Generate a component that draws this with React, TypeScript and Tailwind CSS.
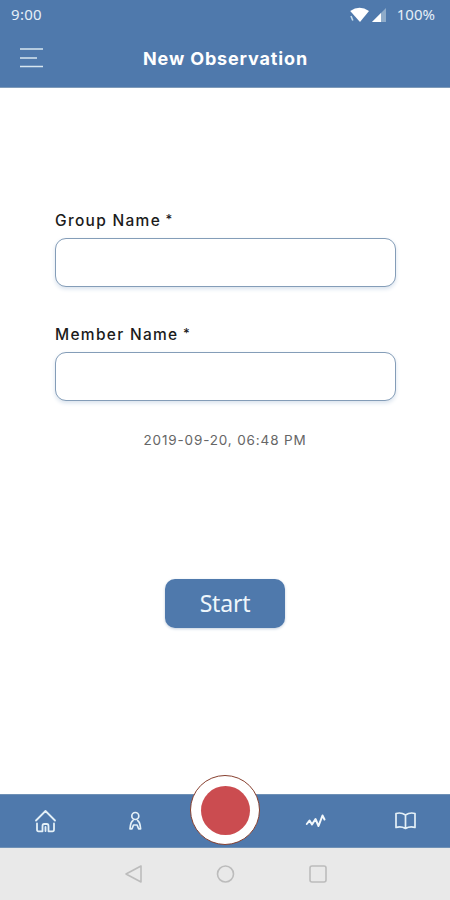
import type { ReactNode } from 'react';

function StatusBar() {
  return (
    <div className="flex h-[29px] items-center pl-[11px] pr-[15px] font-['Noto_Sans','Open_Sans',sans-serif] text-[15px] text-[#e5eff7]">
      <span className="tracking-[0.3px]">9:00</span>
      <svg className="ml-auto" width="40" height="18" viewBox="0 0 40 18">
        <path d="M1.200 5Q10.500 -1.500 20 5L11 16Z" fill="#fff" />
        <path d="M2 10l1.800 4.500" stroke="#c4dceb" strokeWidth="1.600" />
        <path d="M23 16L37 2V16Z" fill="#8eabc9" />
        <path d="M23 16L32 7V16Z" fill="#fff" />
      </svg>
      <span className="ml-[8px] tracking-[0px]">100%</span>
    </div>
  );
}

function Header() {
  return (
    <header className="h-[88px] shrink-0 border-b border-[#7f9bb9] bg-[#4f79ac]">
      <StatusBar />
      <div className="grid h-[58px] grid-cols-[60px_1fr_60px] items-center">
        <svg className="ml-[19px]" width="25" height="22" viewBox="0 0 25 22" stroke="#d7e6f0" strokeWidth="1.500">
          <path d="M1 2H24M1 11H18M1 19.500H24" />
        </svg>
        <h1 className="pl-px text-center text-[18px] font-bold tracking-[0.85px] whitespace-nowrap text-white">New Observation</h1>
      </div>
    </header>
  );
}

function Field({ label }: { label: string }) {
  return (
    <label className="block">
      <span className="block h-[28px] pt-[1px] pl-[0.5px] text-[15.5px] leading-[20px] font-medium tracking-[1.3px] text-[#1b1b1b]">
        {label} <span className="-ml-[1px] inline-block -translate-y-[2px] text-[13px] leading-none">*</span>
      </span>
      <input className="block h-[49px] w-full rounded-[11px] border-[1.5px] border-[#849db8] bg-white px-4 shadow-[0_2px_4px_#d8e2ed] outline-none" />
    </label>
  );
}

function Tab({ children }: { children?: ReactNode }) {
  return <div className="flex items-center justify-center">{children}</div>;
}

function TabBar() {
  return (
    <nav className="relative grid h-[54px] shrink-0 grid-cols-5 border-y border-[#6f91b6] bg-[#4f79ac]">
      <Tab>
        <svg width="24" height="24" viewBox="0 0 24 24" fill="none" stroke="#e4f0f7" strokeWidth="1.800" strokeLinecap="round" strokeLinejoin="round">
          <path d="M3 11.500L12.500 2L22 11.500M4 14.500V20.500Q4 22.300 5.500 22.300H9.500V17Q9.500 15 11.200 15H13.800Q15.500 15 15.500 17V22.300H19.500Q21 22.300 21 20.500V14.500M12.500 18V22" />
        </svg>
      </Tab>
      <Tab>
        <svg width="20" height="22" viewBox="0 0 20 22" fill="none" stroke="#e4f0f7" strokeWidth="1.700" strokeLinecap="round" strokeLinejoin="round">
          <circle cx="10.300" cy="6" r="3.500" />
          <path d="M8 10.500Q5.500 12 5 18.800H7L8.500 15H12.100L13.600 18.800H15.600Q15.100 12 12.600 10.500" />
        </svg>
      </Tab>
      <Tab />
      <Tab>
        <svg width="22" height="18" viewBox="0 0 22 18" fill="none" stroke="#f2f8fc" strokeWidth="2" strokeLinecap="round" strokeLinejoin="round">
          <path d="M2.800 12L5.500 8.500L8 12.500L11.500 7L14.500 14L18.500 3.500L20.500 7.500" />
        </svg>
      </Tab>
      <Tab>
        <svg width="24" height="22" viewBox="0 0 24 22" fill="none" stroke="#e4f0f7" strokeWidth="1.700" strokeLinejoin="round">
          <path d="M12.500 5Q8 2 3 3.500V17.500Q8 16 12.500 18.500Q17 16 22 17.500V3.500Q17 2 12.500 5ZM12.500 5V18.500" />
        </svg>
      </Tab>
      <button aria-label="Record" className="absolute top-[-20px] left-[190px] flex size-[70px] items-center justify-center rounded-full border-[1.5px] border-[#87402f] bg-white">
        <span className="size-[49px] rounded-full bg-[#cb4c50]" />
      </button>
    </nav>
  );
}

function SystemBar() {
  return (
    <div className="flex h-[52px] shrink-0 justify-center bg-[#e9e9e9] pt-[16px]">
      <svg width="206" height="20" viewBox="0 0 206 20" fill="none" stroke="#bcbcbc" strokeWidth="1.6" strokeLinejoin="round">
        <path d="M4 10L19 2V18Z" />
        <circle cx="103.500" cy="10" r="8" />
        <rect x="188" y="2" width="16" height="16" rx="2" />
      </svg>
    </div>
  );
}

export default function App() {
  return (
    <div className="flex h-[900px] w-[450px] flex-col overflow-hidden bg-white font-['Inter','Liberation_Sans',sans-serif]">
      <Header />
      <main className="flex flex-1 flex-col px-[54.5px] pt-[122px]">
        <div className="flex flex-col gap-[37px]">
          <Field label="Group Name" />
          <Field label="Member Name" />
        </div>
        <p className="mt-[29px] text-center text-[13.5px] leading-5 tracking-[0.85px] text-[#666]">2019-09-20, 06:48 PM</p>
        <button className="mx-auto mt-[129px] h-[49px] w-[120px] rounded-[10px] bg-[#4f79ac] pb-[1px] font-['Noto_Sans','Open_Sans',sans-serif] text-[23px] tracking-[-0.2px] text-[#eef6fb] shadow-[0_1px_3px_#c3cfdd]">Start</button>
      </main>
      <TabBar />
      <SystemBar />
    </div>
  );
}
